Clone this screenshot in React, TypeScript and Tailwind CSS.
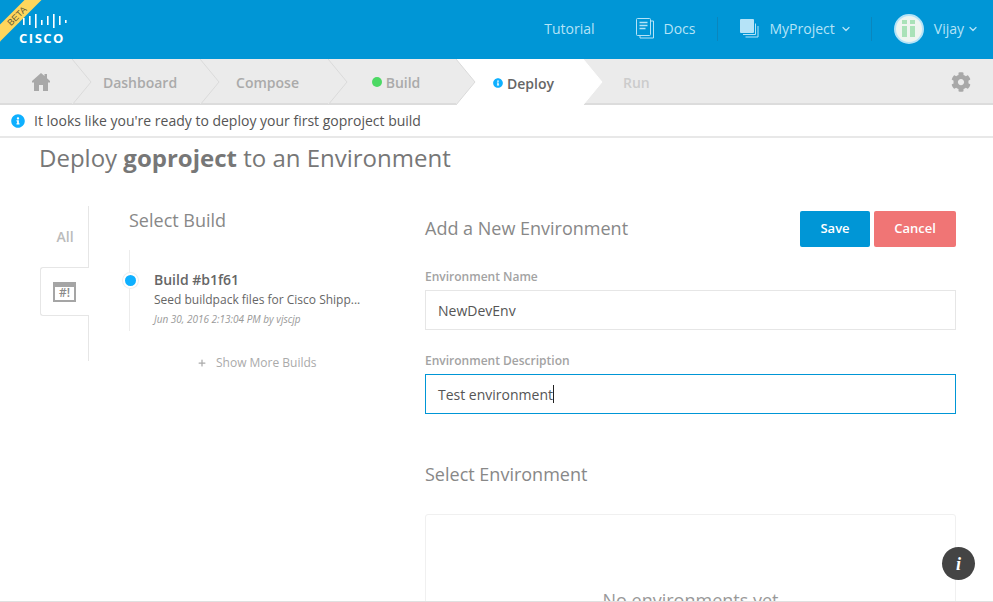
import React from "react";
import { FaCog, FaInfoCircle } from "react-icons/fa";
import { LuChevronDown, LuPlus } from "react-icons/lu";

const font = "font-['Open_Sans',sans-serif]";

const Chevron = ({ fill, stroke }: { fill: string; stroke: string }) => (
    <svg
        width="20"
        height="46"
        viewBox="0 0 20 46"
        className="absolute top-0 left-full z-10"
    >
        <path d="M0 0 L19 23 L0 46 Z" fill={fill} />
        <path d="M0 0 L19 23 L0 46" fill="none" stroke={stroke} strokeWidth="1" />
    </svg>
);

const CiscoLogo = () => (
    <svg width="50" height="14" viewBox="0 0 50 14" className="block">
        {[
            [1, 6, 3],
            [7, 4, 7],
            [13, 2, 9],
            [19, 0, 14],
            [25, 6, 5],
            [31, 2, 9],
            [37, 0, 14],
            [43, 2, 9],
            [49, 6, 3],
        ].map(([x, y, h], i) => (
            <rect key={i} x={x - 1} y={y} width="1.6" height={h} fill="#fff" />
        ))}
    </svg>
);

const HomeIcon = () => (
    <svg width="18" height="18" viewBox="0 0 18 18" className="ml-[10px]">
        <path
            d="M9 0 L12.500 3 V1 H15 V5.200 L18 8 V9.500 H16 V18 H11 V12 H7 V18 H2 V9.500 H0 V8 Z"
            fill="#a8a8a8"
        />
    </svg>
);

const Crumb = ({
    width,
    children,
    fill = "#ebebeb",
    stroke = "#dadada",
}: {
    width: string;
    children: React.ReactNode;
    fill?: string;
    stroke?: string;
}) => (
    <div className={`relative flex h-full items-center justify-center pt-[2px] ${width}`}>
        {children}
        <Chevron fill={fill} stroke={stroke} />
    </div>
);

const App = () => {
    return (
        <div className={`relative h-[602px] w-[993px] overflow-hidden bg-white ${font}`}>
            {/* top bar */}
            <header className="relative flex h-[59px] items-center overflow-hidden bg-[#0096d6] text-[14px] text-[#b5e3f7]">
                <div className="absolute -left-[33px] top-[10px] z-10 flex h-[12px] w-[100px] -rotate-45 items-center justify-center bg-[#ffd65c] font-['Liberation_Sans',sans-serif] text-[9px] leading-none text-[#5f5a3a]">
                    BETA
                </div>
                <div className="ml-[17px] mt-[-1px] flex w-[50px] flex-col items-center">
                    <CiscoLogo />
                    <span className="mt-[3px] text-[13px] font-bold leading-[14px] tracking-[1.5px] text-white">
                        CISCO
                    </span>
                </div>
                <div className="ml-auto mt-[-2px] flex items-center pr-[14px]">
                    <span className="mr-[41px]">Tutorial</span>
                    <svg width="18" height="21" viewBox="0 0 18 21" fill="none" className="mr-[10px]">
                        <path d="M15 3h2.500v17H4v-2" stroke="#b5e3f7" />
                        <rect x="0.500" y="0.500" width="14" height="17" rx="1" stroke="#b5e3f7" />
                        <path d="M3.500 4.500h8M3.500 7.500h8M3.500 10.500h6" stroke="#b5e3f7" strokeWidth="1.500" />
                    </svg>
                    <span className="w-[53px]">Docs</span>
                    <div className="h-[24px] w-px bg-[#0a86bd]" />
                    <svg width="19" height="19" viewBox="0 0 19 19" className="ml-[22px] mr-[11px]">
                        <path d="M3 15.500h12.500V4.500M5.500 18h12.500V7" fill="none" stroke="#b5e3f7" />
                        <rect x="0" y="0" width="14" height="14" rx="1" fill="#b5e3f7" />
                    </svg>
                    <span>MyProject</span>
                    <LuChevronDown size={12} strokeWidth={2.500} className="ml-[5px]" />
                    <div className="ml-[19px] h-[24px] w-px bg-[#0a86bd]" />
                    <div className="ml-[22px] flex h-[30px] w-[30px] items-center justify-center gap-[3px] rounded-full border-2 border-[#b5e3f7] bg-[#eef5f0]">
                        <div className="flex flex-col gap-[2px]">
                            <div className="h-[4px] w-[5px] bg-[#a9e2b8]" />
                            <div className="h-[11px] w-[5px] bg-[#a9e2b8]" />
                        </div>
                        <div className="flex flex-col gap-[2px]">
                            <div className="h-[4px] w-[5px] bg-[#a9e2b8]" />
                            <div className="h-[11px] w-[5px] bg-[#a9e2b8]" />
                        </div>
                    </div>
                    <span className="ml-[10px]">Vijay</span>
                    <LuChevronDown size={12} strokeWidth={2.500} className="ml-[3px]" />
                </div>
            </header>

            {/* steps */}
            <nav className="flex h-[46px] items-center border-b-2 border-[#dcdcdc] bg-[#ebebeb] text-[14px] font-semibold text-[#aaaaaa]">
                <Crumb width="w-[72px]">
                    <HomeIcon />
                </Crumb>
                <Crumb width="w-[128px]">
                    <span className="pl-[8px]">Dashboard</span>
                </Crumb>
                <Crumb width="w-[128px]">
                    <span className="pl-[7px]">Compose</span>
                </Crumb>
                <Crumb width="w-[128px]">
                    <span className="ml-[8px] mr-[4px] h-[10px] w-[10px] rounded-full bg-[#4cd964]" />
                    <span>Build</span>
                </Crumb>
                <div className="relative flex h-[46px] w-[127px] items-center justify-center self-start bg-white pl-[8px] pt-[2px] text-[#666666]">
                    <FaInfoCircle size={10} className="mr-[4px] text-[#0fb0ff]" />
                    <span>Deploy</span>
                    <Chevron fill="#ffffff" stroke="#ffffff" />
                </div>
                <span className="ml-[40px] pt-[2px] text-[#cccccc]">Run</span>
                <FaCog size={20} className="ml-auto mr-[22px] mt-[2px] text-[#a8a8a8]" />
            </nav>

            {/* notice */}
            <div className="flex h-[33px] items-center border-b-2 border-[#e8e8e8] bg-white pl-[11px] text-[14px] text-[#555555]">
                <FaInfoCircle size={14} className="mr-[9px] text-[#0fb0ff]" />
                It looks like you're ready to deploy your first goproject build
            </div>

            {/* content */}
            <main className="pl-[40px] pr-[37px]">
                <h1 className="ml-[-1px] mt-[3px] h-[34px] text-[24px] leading-[34px] text-[#777777]">
                    Deploy <b className="font-bold">goproject</b> to an Environment
                </h1>
                <div className="mt-[31px] flex">
                    {/* framework tabs */}
                    <div className="flex w-[49px] flex-col items-end">
                        <div className="flex h-[61px] w-full items-center justify-center border-r border-[#e6e6e6] text-[14px] font-semibold text-[#bbbbbb]">
                            <span className="pl-[2px]">All</span>
                        </div>
                        <div className="flex h-[49px] w-[49px] items-center justify-center rounded-l-[3px] border border-r-0 border-[#e6e6e6] bg-white pr-[1px]">
                            <div className="flex h-[20px] w-[23px] items-center justify-center border-2 border-t-[5px] border-[#a5a5a5] text-[12px] font-semibold leading-none text-[#8a8a8a]">
                                #!
                            </div>
                        </div>
                        <div className="h-[45px] w-px bg-[#e6e6e6]" />
                    </div>

                    {/* builds */}
                    <div className="ml-[40px] w-[296px]">
                        <h2 className="mt-[2px] text-[18px] leading-[24px] text-[#888888]">Select Build</h2>
                        <div className="relative mt-[18px] h-[81px] border-l border-[#ececec] pl-[24px] pt-[20px]">
                            <div className="absolute -left-[7px] top-[23px] h-[15px] w-[15px] rounded-full border-[2px] border-white bg-[#0fb0ff] shadow-[0_0_0_1px_#eeeeee]" />
                            <div className="text-[14px] font-semibold leading-[19px] text-[#666666]">Build #b1f61</div>
                            <div className="mt-[3px] text-[12px] leading-[16px] text-[#666666]">
                                Seed buildpack files for Cisco Shipp...
                            </div>
                            <div className="mt-[5px] text-[10px] italic leading-[12px] text-[#999999]">
                                Jun 30, 2016 2:13:04 PM by vjscjp
                            </div>
                        </div>
                        <div className="mt-[24px] flex items-center pl-[68px] text-[12px] leading-[16px] text-[#aaaaaa]">
                            <LuPlus size={10} strokeWidth={3} className="mr-[9px]" />
                            Show More Builds
                        </div>
                    </div>

                    {/* environment form */}
                    <div className="flex-1">
                        <div className="flex h-[41px] items-start justify-between">
                            <h2 className="mt-[10px] text-[18px] leading-[24px] text-[#888888]">
                                Add a New Environment
                            </h2>
                            <div className="mt-[5px] flex gap-[4px] text-[13px] font-semibold">
                                <button className="h-[36px] w-[70px] rounded-[2px] bg-[#0096d6] text-white">Save</button>
                                <button className="h-[36px] w-[82px] rounded-[2px] bg-[#f07575] text-white">Cancel</button>
                            </div>
                        </div>
                        <label className="mt-[22px] block text-[12px] font-semibold leading-[16px] text-[#a3a3a3]">
                            Environment Name
                        </label>
                        <div className="mt-[5px] flex h-[40px] items-center border border-[#e6e6e6] pl-[12px] text-[14px] text-[#555555]">
                            NewDevEnv
                        </div>
                        <label className="mt-[23px] block text-[12px] font-semibold leading-[16px] text-[#a3a3a3]">
                            Environment Description
                        </label>
                        <div className="mt-[5px] flex h-[40px] items-center border border-[#0096d6] pl-[12px] text-[14px] text-[#555555]">
                            Test environment
                            <span className="h-[18px] w-px bg-[#222222]" />
                        </div>
                        <h2 className="mt-[48px] text-[18px] leading-[24px] text-[#888888]">Select Environment</h2>
                        <div className="mt-[28px] h-[120px] rounded-[3px] border border-[#f0f0f0] pt-[73px] text-center text-[18px] leading-[24px] text-[#999999]">
                            No environments yet
                        </div>
                    </div>
                </div>
            </main>

            {/* page edge and help button */}
            <div className="absolute bottom-0 left-0 h-px w-full bg-[#e0e0e0]" />
            <div className="absolute left-[942px] top-[547px] flex h-[33px] w-[33px] items-center justify-center rounded-full bg-[#444444] font-['Liberation_Serif',serif] text-[18px] font-bold italic leading-none text-white">
                i
            </div>
        </div>
    );
};

export default App;
